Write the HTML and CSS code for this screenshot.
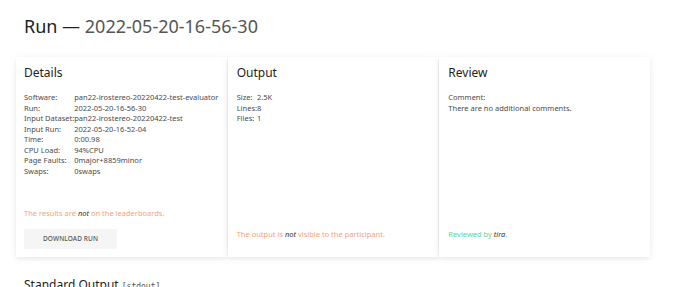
FILE: index.html
```html
<!DOCTYPE html>
<html lang="en">
<head>
    <meta charset="UTF-8">
    <meta name="viewport" content="width=device-width, initial-scale=1.0">
    <title>Run 2022-05-20-16-56-30</title>
    <link rel="stylesheet" href="styles.css">
</head>
<body>
    <div class="page">
        <h1 class="title">Run — <span class="run-id">2022-05-20-16-56-30</span></h1>

        <div class="cards">
            <div class="card">
                <h2>Details</h2>
                <table class="info">
                    <tr><td>Software:</td><td>pan22-irostereo-20220422-test-evaluator</td></tr>
                    <tr><td>Run:</td><td>2022-05-20-16-56-30</td></tr>
                    <tr><td>Input Dataset:</td><td>pan22-irostereo-20220422-test</td></tr>
                    <tr><td>Input Run:</td><td>2022-05-20-16-52-04</td></tr>
                    <tr><td>Time:</td><td>0:00.98</td></tr>
                    <tr><td>CPU Load:</td><td>94%CPU</td></tr>
                    <tr><td>Page Faults:</td><td>0major+8859minor</td></tr>
                    <tr><td>Swaps:</td><td>0swaps</td></tr>
                </table>
                <div class="card-foot">
                    <p class="note warn">The results are <em>not</em> on the leaderboards.</p>
                    <button class="btn">Download Run</button>
                </div>
            </div>

            <div class="card">
                <h2>Output</h2>
                <table class="info">
                    <tr><td>Size:</td><td>2.5K</td></tr>
                    <tr><td>Lines:</td><td>8</td></tr>
                    <tr><td>Files:</td><td>1</td></tr>
                </table>
                <div class="card-foot">
                    <p class="note warn last">The output is <em>not</em> visible to the participant.</p>
                </div>
            </div>

            <div class="card">
                <h2>Review</h2>
                <div class="comment">
                    <div>Comment:</div>
                    <div>There are no additional comments.</div>
                </div>
                <div class="card-foot">
                    <p class="note ok last">Reviewed by <em>tira</em>.</p>
                </div>
            </div>
        </div>

        <h2 class="section">Standard Output <span class="tag">[stdout]</span></h2>
    </div>
</body>
</html>
```

FILE: styles.css
```css
body {
    margin: 0;
    background-color: #fff;
    color: #4a4a4a;
    font-family: "Noto Sans", "Open Sans", sans-serif;
}
.page {
    padding: 14px 0 0 16px;
    width: 634px;
}
.title {
    margin: 0 0 19px 8px;
    font-size: 18px;
    line-height: 24px;
    font-weight: normal;
    color: #222;
}
.run-id {
    color: #555;
}
.cards {
    display: grid;
    grid-template-columns: repeat(3, 1fr);
    gap: 1px;
}
.card {
    display: flex;
    flex-direction: column;
    align-items: flex-start;
    padding: 8px 8px 8px 9px;
    background-color: #fff;
    box-shadow: 0 2px 4px rgba(0, 0, 0, 0.06), 0 1px 10px rgba(0, 0, 0, 0.05);
    font-size: 7.5px;
    line-height: 10.5px;
}
.card:first-child {
    padding-left: 8px;
}
.card h2 {
    margin: 0 0 11px;
    font-size: 12px;
    line-height: 16px;
    font-weight: normal;
    color: #222;
}
.info {
    border-spacing: 0;
    font-size: 7.5px;
    line-height: 10.5px;
    color: #4a4a4a;
}
.info td {
    padding: 0;
    vertical-align: top;
    white-space: nowrap;
}
.comment {
    color: #4a4a4a;
}
.card-foot {
    margin-top: auto;
    align-self: stretch;
}
.note {
    margin: 0;
    padding-top: 32px;
}
.note em {
    color: #333;
}
.note.last {
    margin-bottom: 9px;
}
.warn {
    color: #f7a27a;
}
.ok {
    color: #5cd5a0;
}
.btn {
    display: block;
    margin-top: 10px;
    width: 93px;
    height: 20px;
    padding: 0;
    border: none;
    border-radius: 2px;
    background-color: #f5f5f5;
    color: #555;
    font-family: inherit;
    font-size: 6.5px;
    font-weight: 500;
    text-transform: uppercase;
    letter-spacing: 0.1px;
}
.section {
    margin: 20px 0 0 8px;
    font-size: 12px;
    line-height: 16px;
    font-weight: normal;
    color: #222;
}
.tag {
    font-family: "DejaVu Sans Mono", monospace;
    font-size: 8px;
    color: #555;
}
```
